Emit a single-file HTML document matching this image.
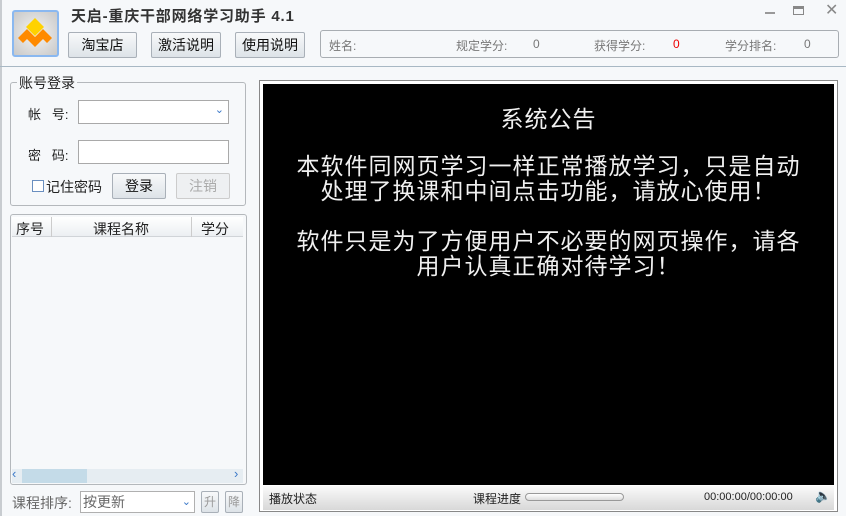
<!DOCTYPE html>
<html><head><meta charset="utf-8"><style>
*{box-sizing:border-box;margin:0;padding:0}
body{width:846px;height:516px;background:#f6f8fa;font-family:"Liberation Sans","Noto Sans CJK SC",sans-serif;font-size:13px;color:#222;position:relative;overflow:hidden}
.a{position:absolute}
.btn{position:absolute;border:1px solid #a9b0b8;border-radius:2px;background:linear-gradient(#f8f9fa,#dde3e8);text-align:center;font-size:14px;line-height:24px;color:#111}
.lbl{color:#777;font-size:12px}
</style></head><body>
<div class="a" style="left:0;top:0;width:2px;height:516px;background:#c8ccd0"></div>
<div class="a" style="left:12px;top:10px;width:47px;height:47px;border:2px solid #8ab8f0;border-radius:3px;background:radial-gradient(#f4f4f4,#c8c8c8)">
<svg width="43" height="43" viewBox="0 0 43 43"><polygon points="21,6 30,15 21,24 12,15" fill="#ffd200"/><polygon points="4,26 13,17 21,25 29,17 38,26 33,31 29,27 21,35 13,27 9,31" fill="#ff8a00"/></svg></div>
<div class="a" style="left:71px;top:5px;font-size:15px;font-weight:bold;color:#333;letter-spacing:0.8px">天启-重庆干部网络学习助手 4.1</div>
<div class="btn" style="left:68px;top:32px;width:69px;height:26px">淘宝店</div>
<div class="btn" style="left:151px;top:32px;width:70px;height:26px">激活说明</div>
<div class="btn" style="left:235px;top:32px;width:70px;height:26px">使用说明</div>
<div class="a" style="left:320px;top:30px;width:519px;height:28px;border:1px solid #a8adb2;border-radius:3px"></div>
<div class="a lbl" style="left:329px;top:37px">姓名:</div>
<div class="a lbl" style="left:456px;top:37px">规定学分:</div><div class="a lbl" style="left:533px;top:37px">0</div>
<div class="a lbl" style="left:594px;top:37px">获得学分:</div><div class="a lbl" style="left:673px;top:37px;color:#e00">0</div>
<div class="a lbl" style="left:725px;top:37px">学分排名:</div><div class="a lbl" style="left:804px;top:37px">0</div>
<div class="a" style="left:765px;top:12px;width:10px;height:2px;background:#999"></div>
<div class="a" style="left:793px;top:6px;width:11px;height:9px;border:1px solid #888;border-top-width:3px"></div>
<div class="a" style="left:825px;top:0px;font-size:16px;color:#888">✕</div>
<div class="a" style="left:0;top:66px;width:846px;height:1px;background:#a8b8c4"></div>
<div class="a" style="left:10px;top:82px;width:236px;height:124px;border:1px solid #b4b8bc;border-radius:3px"></div>
<div class="a" style="left:17px;top:73px;background:#f6f8fa;padding:0 2px;font-size:14px">账号登录</div>
<div class="a" style="left:28px;top:104px">帐&nbsp;&nbsp;&nbsp;号:</div>
<div class="a" style="left:78px;top:100px;width:151px;height:24px;border:1px solid #a9a9a9;background:#fff"><span class="a" style="right:4px;top:2px;color:#3a78c8;font-size:11px">&#8964;</span></div>
<div class="a" style="left:28px;top:145px">密&nbsp;&nbsp;&nbsp;码:</div>
<div class="a" style="left:78px;top:140px;width:151px;height:24px;border:1px solid #a9a9a9;background:#fff"></div>
<div class="a" style="left:32px;top:180px;width:12px;height:12px;border:1px solid #6a8fc0;background:#fff"></div>
<div class="a" style="left:46px;top:177px;font-size:14px">记住密码</div>
<div class="btn" style="left:112px;top:173px;width:54px;height:26px">登录</div>
<div class="btn" style="left:176px;top:173px;width:54px;height:26px;color:#aaa;background:#eef0f2;border-color:#ccc">注销</div>
<div class="a" style="left:10px;top:214px;width:237px;height:271px;border:1px solid #b4b8bc;border-radius:3px;background:#f6f8fa"></div>
<div class="a" style="left:12px;top:217px;width:231px;height:20px;background:linear-gradient(#fff,#eceff2);border-bottom:1px solid #d0d4d8"></div>
<div class="a" style="left:51px;top:217px;width:1px;height:20px;background:#ccc"></div>
<div class="a" style="left:191px;top:217px;width:1px;height:20px;background:#ccc"></div>
<div class="a" style="left:16px;top:219px;font-size:14px">序号</div>
<div class="a" style="left:93px;top:219px;font-size:14px">课程名称</div>
<div class="a" style="left:201px;top:219px;font-size:14px">学分</div>
<div class="a" style="left:12px;top:469px;width:231px;height:14px;background:#e6edf2"></div>
<div class="a" style="left:22px;top:469px;width:65px;height:14px;background:#c4dbe8"></div>
<div class="a" style="left:12px;top:466px;color:#3a78c8;font-size:13px">‹</div>
<div class="a" style="left:234px;top:466px;color:#3a78c8;font-size:13px">›</div>
<div class="a" style="left:12px;top:493px;color:#666;font-size:14px">课程排序:</div>
<div class="a" style="left:80px;top:491px;width:115px;height:22px;border:1px solid #b0b0b0;background:#fff;color:#666;font-size:14px;padding-left:2px;line-height:20px">按更新<span class="a" style="right:3px;top:0;color:#3a78c8;font-size:11px">&#8964;</span></div>
<div class="btn" style="left:201px;top:491px;width:18px;height:22px;font-size:12px;color:#999;line-height:20px">升</div>
<div class="btn" style="left:225px;top:491px;width:18px;height:22px;font-size:12px;color:#999;line-height:20px">降</div>
<div class="a" style="left:259px;top:80px;width:579px;height:432px;border:1px solid #888;background:#fff"></div>
<div class="a" style="left:263px;top:84px;width:571px;height:401px;background:#000;color:#f0f0f0;text-align:center;font-size:23px;line-height:25px;letter-spacing:1px">
<div style="margin-top:23px">系统公告</div>
<div style="margin-top:22px">本软件同网页学习一样正常播放学习，只是自动<br>处理了换课和中间点击功能，请放心使用！</div>
<div style="margin-top:25px">软件只是为了方便用户不必要的网页操作，请各<br>用户认真正确对待学习！</div>
</div>
<div class="a" style="left:263px;top:486px;width:571px;height:24px;background:linear-gradient(#fafafa,#d8d8d8)"></div>
<div class="a" style="left:269px;top:490px;font-size:12px">播放状态</div>
<div class="a" style="left:473px;top:490px;font-size:12px">课程进度</div>
<div class="a" style="left:525px;top:493px;width:99px;height:8px;border:1px solid #999;border-radius:4px;background:linear-gradient(#fff,#ddd)"></div>
<div class="a" style="left:704px;top:491px;font-size:11px">00:00:00/00:00:00</div>
<div class="a" style="left:815px;top:488px;font-size:13px">🔈</div>
</body></html>
